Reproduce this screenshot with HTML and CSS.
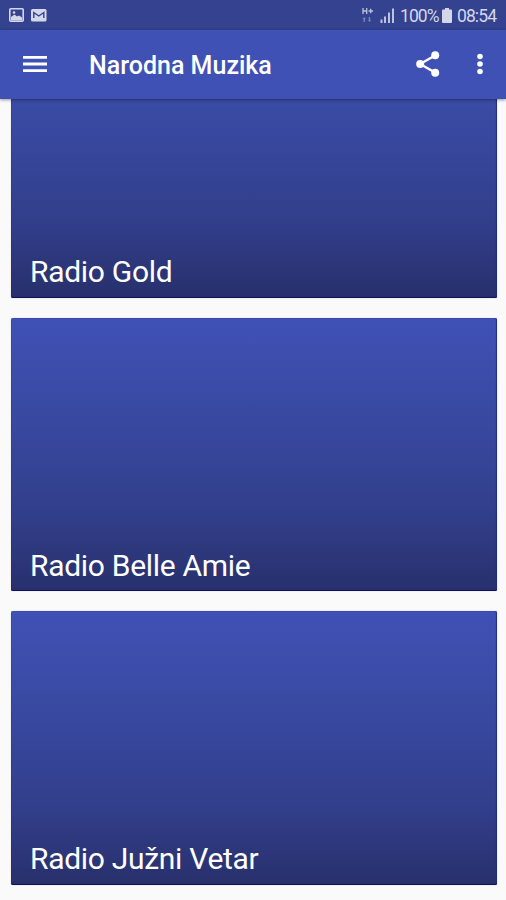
FILE: index.html
```html
<!DOCTYPE html>
<html lang="sr">
<head>
    <meta charset="UTF-8">
    <meta name="viewport" content="width=device-width, initial-scale=1.0">
    <title>Narodna Muzika</title>
    <link rel="stylesheet" href="styles.css">
</head>
<body>
    <div class="status-bar">
        <svg class="notice" width="15" height="14" viewBox="0 0 15 14">
            <rect x="0.8" y="0.8" width="13.4" height="12.4" rx="1" fill="#34428f" stroke="#d3d7ea" stroke-width="1.6"/>
            <path d="M2 12.5V9L5.5 6.5L8 8.5L10 7.5L13 9.5V12.5z" fill="#d3d7ea"/>
            <circle cx="5" cy="4.5" r="1.3" fill="#d3d7ea"/>
        </svg>
        <svg class="notice" width="16" height="14" viewBox="0 0 16 14">
            <rect x="0" y="1" width="15.5" height="12.5" rx="1.5" fill="#d3d7ea"/>
            <path d="M2.8 10V4.5L7.8 8L12.8 4.5V10" fill="none" stroke="#34428f" stroke-width="1.4"/>
        </svg>
        <div class="system">
            <svg width="12" height="16" viewBox="0 0 12 16">
                <path d="M1 1V7M4.7 1V7M1 4H4.7M6.5 4H11M8.7 1.8V6.2" fill="none" stroke="#bcc2df" stroke-width="1.3"/>
                <path d="M2.2 10L4 12H3V15H1.5V12H0.5zM7.5 15L5.7 13H6.7V10H8.2V13H9.2z" fill="#7580b6"/>
            </svg>
            <svg class="signal" width="15" height="15" viewBox="0 0 15 15">
                <path d="M1.5 11.5V15M5 8.5V15M9 4.5V15M13 0.5V15" fill="none" stroke="#bcc2df" stroke-width="2"/>
            </svg>
            <span class="percent">100%</span>
            <svg class="battery" width="10" height="15" viewBox="0 0 10 15">
                <path d="M3 0H7V1.5H9Q10 1.5 10 2.5V14Q10 15 9 15H1Q0 15 0 14V2.5Q0 1.5 1 1.5H3z" fill="#d3d7ea"/>
            </svg>
            <span class="clock">08:54</span>
        </div>
    </div>
    <header class="toolbar">
        <svg class="menu" width="24" height="18" viewBox="0 0 24 18">
            <path d="M0 2.3H24M0 9H24M0 15.7H24" stroke="#fff" stroke-width="2.8"/>
        </svg>
        <h1>Narodna Muzika</h1>
        <svg class="share" width="24" height="26" viewBox="0 0 24 26">
            <path d="M19 4.5L4.2 13L19 21.5" fill="none" stroke="#fff" stroke-width="2.4"/>
            <circle cx="19.2" cy="4.3" r="4" fill="#fff"/>
            <circle cx="4.2" cy="13" r="4" fill="#fff"/>
            <circle cx="19.2" cy="21.7" r="4" fill="#fff"/>
        </svg>
        <svg class="more" width="6" height="22" viewBox="0 0 6 22">
            <circle cx="3" cy="3.5" r="2.8" fill="#fff"/>
            <circle cx="3" cy="11" r="2.8" fill="#fff"/>
            <circle cx="3" cy="18.5" r="2.8" fill="#fff"/>
        </svg>
    </header>
    <main class="stations">
        <div class="station">Radio Gold</div>
        <div class="station">Radio Belle Amie</div>
        <div class="station">Radio Južni Vetar</div>
    </main>
</body>
</html>
```

FILE: styles.css
```css
* {
    box-sizing: border-box;
}
body {
    display: flex;
    flex-direction: column;
    height: 100vh;
    margin: 0;
    overflow: hidden;
    background-color: #fafafa;
    font-family: Roboto, sans-serif;
}
svg {
    display: block;
    flex-shrink: 0;
}
.status-bar {
    display: flex;
    align-items: center;
    flex-shrink: 0;
    height: 30px;
    padding: 0 9px;
    background-color: #34428f;
}
.notice {
    margin-right: 7px;
}
.system {
    display: flex;
    align-items: center;
    margin-left: auto;
    color: #d3d7ea;
    line-height: 30px;
}
.signal {
    margin: 1px 5px 0 6px;
}
.percent {
    width: 39px;
    padding-top: 1px;
    font-size: 17.5px;
    letter-spacing: -0.9px;
}
.battery {
    margin: 0 5px 0 3px;
}
.clock {
    width: 40px;
    padding-top: 1px;
    font-size: 17.5px;
    letter-spacing: -0.9px;
}
.toolbar {
    display: flex;
    align-items: center;
    flex-shrink: 0;
    z-index: 1;
    height: 69px;
    padding: 0 23px 1px;
    background-color: #3f51b5;
    box-shadow: 0 1px 3px rgba(0, 0, 0, 0.4);
    color: white;
}
.toolbar h1 {
    margin: 3px auto 0 42px;
    font-size: 25px;
    font-weight: 500;
    line-height: 30px;
}
.share {
    margin-right: 37px;
}
/* scrolled to the end, so the first card runs under the toolbar */
.stations {
    display: flex;
    flex: 1;
    flex-direction: column;
    justify-content: flex-end;
    gap: 20px;
    min-height: 0;
    padding: 0 9px 15.5px 11px;
    overflow: hidden;
}
.station {
    display: flex;
    align-items: flex-end;
    flex-shrink: 0;
    height: 273.3px;
    padding: 0 19px 7.5px;
    border-radius: 2px;
    background: linear-gradient(#3f51b5, #38489f 40%, #323f8c 70%, #28306c);
    box-shadow: inset 0 -1px 1px #140f60, inset -1px 0 1px #26308a, 0 0 1px #8b92bd;
    color: white;
    font-size: 30px;
    letter-spacing: -0.3px;
    line-height: 36px;
}
```
